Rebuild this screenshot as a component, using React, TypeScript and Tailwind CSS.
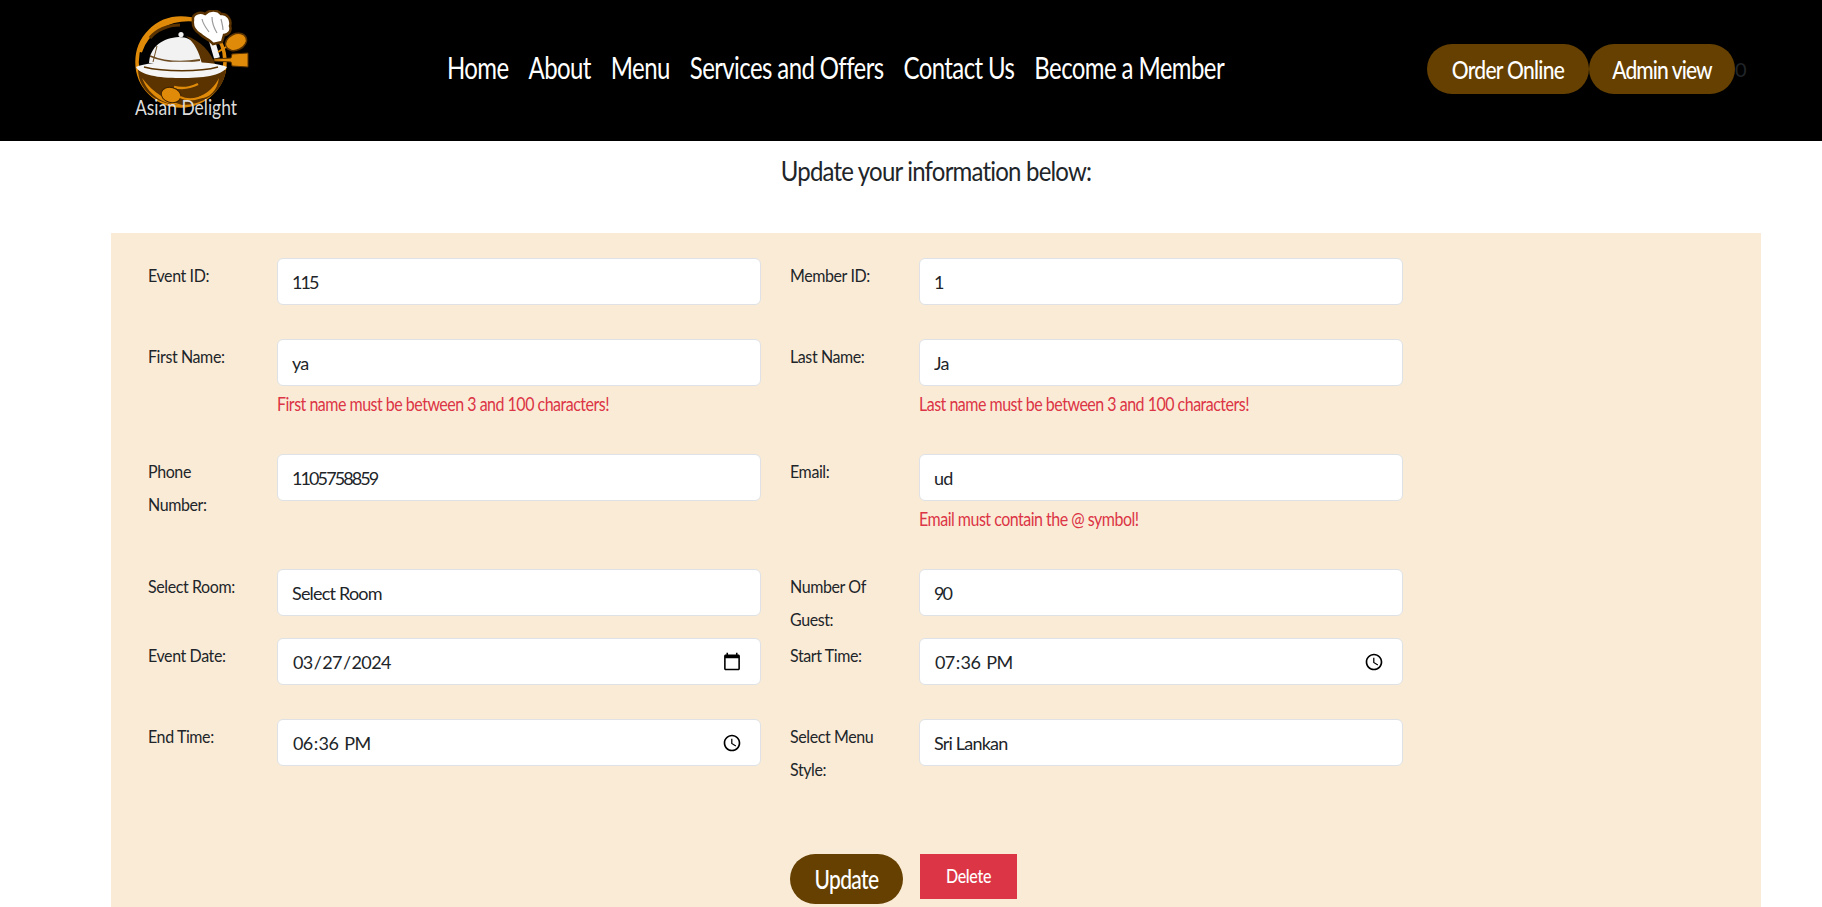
import React from "react";

const inputBase =
  "h-[47px] w-full rounded-[6px] border border-[#dee2e6] bg-white px-[14px] text-[18px] leading-[28px] text-[#212529] outline-none";
const inputClass = inputBase + " appearance-none tracking-[-0.8px]";
const numClass = inputBase + " appearance-none tracking-[-1.9px]";
const dateClass =
  inputBase +
  " tracking-[-0.6px] [&::-webkit-calendar-picker-indicator]:mr-[4px] [&::-webkit-calendar-picker-indicator]:h-[20px] [&::-webkit-calendar-picker-indicator]:w-[20px] [&::-webkit-calendar-picker-indicator]:p-0";

function Logo() {
  return (
    <svg viewBox="0 0 140 120" className="ml-[120px] mt-[2px] h-[120px] w-[140px] shrink-0" aria-label="Asian Delight logo">
      <circle cx="61" cy="52" r="44" fill="#000" stroke="#e08a0a" strokeWidth="3.5" />
      <path d="M20 42 C26 22 48 6 78 10" fill="none" stroke="#e08a0a" strokeWidth="4" />
      <path d="M30 28 C36 20 48 15 60 15" fill="none" stroke="#5a3300" strokeWidth="3" />
      <path d="M18 60 C19 82 38 95 61 95 C84 95 103 82 106 60 Z" fill="#5a3300" />
      <path d="M22 68 C30 88 46 95 62 95 C48 91 34 84 22 68 Z" fill="#e08a0a" />
      <path d="M76 88 C88 84 95 76 99 68 C97 82 88 90 76 88 Z" fill="#e08a0a" />
      <path d="M54 77 C62 79 70 78 78 74" fill="none" stroke="#e08a0a" strokeWidth="2.5" />
      <ellipse cx="51" cy="85" rx="10" ry="7.5" transform="rotate(15 51 85)" fill="#e08a0a" stroke="#3a2000" />
      <path d="M60 87 C68 91 76 90 86 85" fill="none" stroke="#e08a0a" strokeWidth="2" />
      <path d="M29 53 C30 36 43 28 59 27 C73 27 82 38 86 53 Z" fill="#f2f2f2" />
      <path d="M66 26 C80 30 91 42 95 54 L82 54 C79 42 75 33 66 26 Z" fill="#5a3300" />
      <path d="M30 46 C44 52 62 53 80 50" fill="none" stroke="#6b4a20" strokeWidth="1.8" />
      <path d="M37 36 L33 52" stroke="#6b4a20" strokeWidth="1" />
      <circle cx="61" cy="24.5" r="2.6" fill="#f2f2f2" />
      <path d="M16 57 C30 50 92 50 107 57 C102 66 82 68 60 68 C38 68 20 65 16 57 Z" fill="#f5f5f5" />
      <path d="M24 57 C44 62 80 62 98 57" fill="none" stroke="#5a3300" strokeWidth="1.5" />
      <path d="M90 24 L97 48" stroke="#f2f2f2" strokeWidth="6" />
      <path d="M73 10 C72 4 80 1 85 4 C90 -1 98 0 101 4 C107 3 112 10 110 16 C112 21 108 25 104 25 L102 32 L93 34 C90 30 84 28 80 24 C75 21 72 16 73 10 Z" fill="#fff" stroke="#5a3300" strokeWidth="2.5" />
      <path d="M82 9 C83 14 86 18 89 22 M92 7 C92 12 94 18 97 23 M101 9 C102 13 103 17 103 20" fill="none" stroke="#9a9a9a" strokeWidth="1.2" />
      <ellipse cx="116" cy="32" rx="11" ry="8" transform="rotate(-25 116 32)" fill="#e08a0a" stroke="#5a3300" strokeWidth="1.5" />
      <path d="M106 37 L98 42" stroke="#e08a0a" strokeWidth="2" />
      <path d="M94 49 L111 48 L112 44 L128 43 L128 57 L112 56 L111 52 L94 51 Z" fill="#e08a0a" stroke="#5a3300" strokeWidth="1" />
      <text x="15" y="105" fill="#dcdcdc" fontSize="21" textLength="102" lengthAdjust="spacingAndGlyphs" fontFamily="Lato, sans-serif">Asian Delight</text>
    </svg>
  );
}

function Field({ label, error, children }: { label: React.ReactNode; error?: string; children: React.ReactNode }) {
  return (
    <div className="flex w-[613px] shrink-0">
      <label className="w-[129px] shrink-0 pr-[30px] text-[16px] tracking-[-0.4px] text-[#212529]">
        <span className="block origin-top scale-y-[1.12] leading-[30.4px]">{label}</span>
      </label>
      <div className="w-[484px] shrink-0">
        {children}
        {error ? <p className="mt-[4px] origin-top scale-y-[1.15] text-[16px] leading-[23.5px] tracking-[-0.5px] text-[#dc3545]">{error}</p> : null}
      </div>
    </div>
  );
}

export default function App() {
  const nav = ["Home", "About", "Menu", "Services and Offers", "Contact Us", "Become a Member"];
  const pill = "h-[50px] rounded-[25px] bg-[#654000] font-medium text-white";
  return (
    <div className="h-screen overflow-hidden bg-white font-['Lato','Liberation_Sans',sans-serif] text-[#212529]">
      <header className="flex h-[141px] items-center bg-black pb-[3px]">
        <Logo />
        <nav className="mb-[2px] ml-[187px] flex scale-y-[1.25] gap-[20px] text-[24px] leading-[40px] text-white">
          {nav.map((n) => (
            <a key={n} className="whitespace-nowrap tracking-[-0.6px]">{n}</a>
          ))}
        </nav>
        <div className="ml-auto mr-[77px] flex items-center">
          <button className={pill + " w-[162px] text-[21px] tracking-[-0.7px]"}><span className="block scale-y-[1.2]">Order Online</span></button>
          <button className={pill + " w-[146px] text-[21px] tracking-[-0.9px]"}><span className="block scale-y-[1.2]">Admin view</span></button>
          <span className="w-[10px] text-center text-[20px] text-[#212529]">0</span>
        </div>
      </header>

      <main className="ml-[111px] w-[1650px]">
        <div className="flex h-[92px] items-start justify-center pt-[12px]">
          <h2 className="scale-y-[1.15] text-[24px] leading-[36px] tracking-[-0.8px] text-[#212529]">
            Update your information below:
          </h2>
        </div>
        <form className="bg-[#faebd7] pl-[37px] pt-[25px] pb-[40px]">
          <div className="mb-[34px] flex gap-[29px]">
            <Field label="Event ID:"><input defaultValue="115" className={numClass} /></Field>
            <Field label="Member ID:"><input defaultValue="1" className={numClass} /></Field>
          </div>
          <div className="mb-[37px] flex h-[78px] gap-[29px]">
            <Field label="First Name:" error="First name must be between 3 and 100 characters!"><input defaultValue="ya" className={inputClass} /></Field>
            <Field label="Last Name:" error="Last name must be between 3 and 100 characters!"><input defaultValue="Ja" className={inputClass} /></Field>
          </div>
          <div className="mb-[37px] flex h-[78px] gap-[29px]">
            <Field label="Phone Number:"><input defaultValue="1105758859" className={numClass} /></Field>
            <Field label="Email:" error="Email must contain the @ symbol!"><input defaultValue="ud" className={inputClass} /></Field>
          </div>
          <div className="mb-[22px] flex h-[47px] gap-[29px]">
            <Field label="Select Room:">
              <select className={inputClass} defaultValue="Select Room"><option>Select Room</option></select>
            </Field>
            <Field label="Number Of Guest:"><input defaultValue="90" className={numClass} /></Field>
          </div>
          <div className="mb-[34px] flex gap-[29px]">
            <Field label="Event Date:"><input type="date" defaultValue="2024-03-27" className={dateClass} /></Field>
            <Field label="Start Time:"><input type="time" defaultValue="19:36" className={dateClass} /></Field>
          </div>
          <div className="mb-[74px] flex gap-[29px]">
            <Field label="End Time:"><input type="time" defaultValue="18:36" className={dateClass} /></Field>
            <Field label="Select Menu Style:">
              <select className={inputClass} defaultValue="Sri Lankan"><option>Sri Lankan</option></select>
            </Field>
          </div>
          <div className="ml-[642px] flex items-start">
            <button type="button" className={pill + " w-[113px] text-[21px] tracking-[-0.6px]"}><span className="block scale-y-[1.25]">Update</span></button>
            <button type="button" className="ml-[17px] h-[45px] w-[97px] bg-[#dc3545] text-[16px] font-medium tracking-[-0.3px] text-white"><span className="block scale-y-[1.2]">Delete</span></button>
          </div>
        </form>
      </main>
    </div>
  );
}
